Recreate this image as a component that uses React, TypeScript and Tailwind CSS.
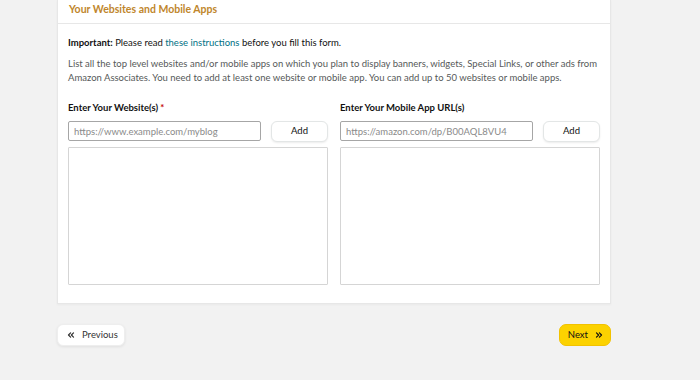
import React from 'react';
import { ChevronsLeft, ChevronsRight } from 'lucide-react';

const font = { fontFamily: 'Lato, "Noto Sans", Arial, sans-serif' };

const UrlColumn = ({ label, placeholder, required }: { label: string; placeholder: string; required?: boolean }) => {
  return (
    <div className="flex flex-col">
      <label className="text-[9.5px] leading-[14px] font-bold text-[#111]">
        {label}
        {required && <span className="text-[#c40000]"> *</span>}
      </label>
      <div className="mt-[6px] flex gap-[10px]">
        <input
          className="h-[20px] flex-1 min-w-0 border border-[#a6a6a6] rounded-[2px] px-[5px] text-[9.5px] text-[#333] placeholder:text-[#8a8a8a] outline-none"
          placeholder={placeholder}
        />
        <button className="h-[21px] w-[57px] rounded-[6px] border border-[#e3e6e6] bg-white text-[9.5px] text-[#111] shadow-[0_1px_2px_rgba(0,0,0,0.08)]">
          Add
        </button>
      </div>
      <div className="mt-[5px] h-[138px] border border-[#d5d5d5] rounded-[1px] bg-white" />
    </div>
  );
};

export default function App() {
  return (
    <div className="min-h-[380px] w-[700px] bg-[#f2f2f2] text-[#333]" style={font}>
      <div className="ml-[57px] w-[554px]">
        <div className="bg-white border border-[#e7e7e7] border-t-0 shadow-[0_1px_2px_rgba(0,0,0,0.04)]">
          <div className="px-[11px] pt-[2px] pb-[7px] border-b border-[#e7e7e7]">
            <h2 className="text-[10.5px] leading-[14px] font-bold text-[#c0862c]">Your Websites and Mobile Apps</h2>
          </div>
          <div className="px-[10px] pt-[12px] pb-[18px]">
            <p className="text-[9.5px] leading-[14px] text-[#111]">
              <span className="font-bold">Important:</span> Please read{' '}
              <a className="text-[#007185]">these instructions</a> before you fill this form.
            </p>
            <p className="mt-[7px] text-[9.5px] leading-[14px] text-[#565959]">
              List all the top level websites and/or mobile apps on which you plan to display banners, widgets, Special Links, or other ads from
              Amazon Associates. You need to add at least one website or mobile app. You can add up to 50 websites or mobile apps.
            </p>
            <div className="mt-[16px] grid grid-cols-2 gap-[12px]">
              <UrlColumn label="Enter Your Website(s)" placeholder="https://www.example.com/myblog" required />
              <UrlColumn label="Enter Your Mobile App URL(s)" placeholder="https://amazon.com/dp/B00AQL8VU4" />
            </div>
          </div>
        </div>
        <div className="mt-[20px] flex justify-between">
          <button className="h-[22px] flex items-center gap-[6px] pl-[8px] pr-[6px] rounded-[6px] bg-white border border-[#eeeeee] shadow-[0_1px_3px_rgba(0,0,0,0.08)] text-[9.5px] text-[#333]">
            <ChevronsLeft size={10} strokeWidth={3} />
            Previous
          </button>
          <button className="h-[22px] flex items-center gap-[6px] pl-[8px] pr-[6px] rounded-[7px] bg-[#fcd200] border border-[#f2c200] text-[9.5px] text-[#111]">
            Next
            <ChevronsRight size={10} strokeWidth={3} />
          </button>
        </div>
      </div>
    </div>
  );
}
